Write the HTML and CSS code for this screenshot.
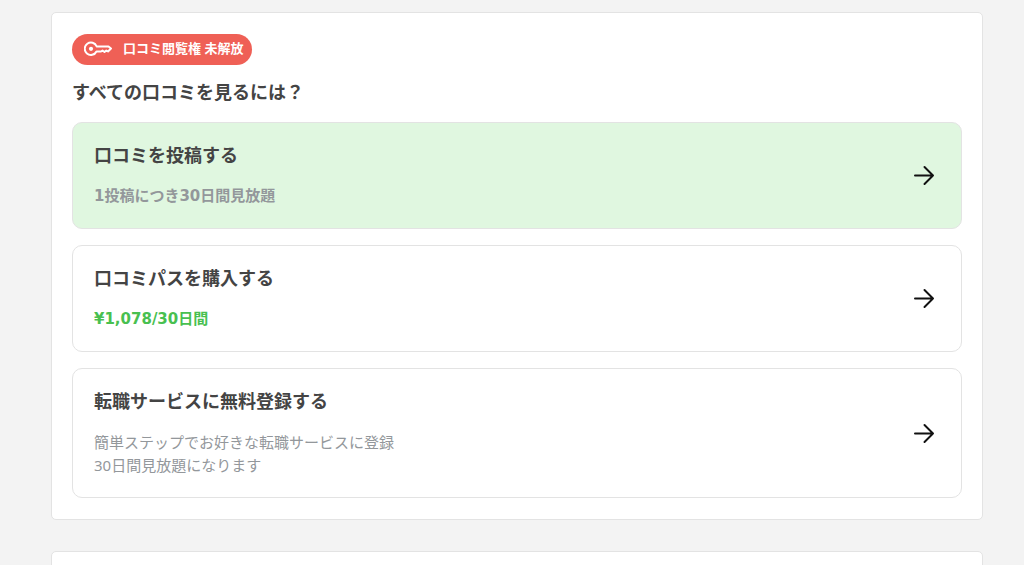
FILE: index.html
```html
<!DOCTYPE html>
<html lang="ja">
<head>
<meta charset="utf-8">
<meta name="viewport" content="width=device-width, initial-scale=1">
<title>口コミ閲覧権</title>
<link rel="stylesheet" href="styles.css">
</head>
<body>
<svg class="sprite" aria-hidden="true">
  <symbol id="arrow" viewBox="0 0 22 22">
    <path d="M2 11.500H20M11.500 3L20 11.500L11.500 20" fill="none" stroke="currentColor" stroke-width="2" stroke-linecap="round" stroke-linejoin="round"/>
  </symbol>
</svg>
<main class="page">
  <section class="panel">
    <p class="badge">
      <svg class="badge-icon" viewBox="0 0 28 16" aria-hidden="true">
        <path d="M12.700 5.500H24.500L27 7.500L24 10.500L22.300 9.500L20.500 11L18.500 9.500L17 10.500H12.500A6.200 6.200 0 1 1 12.700 5.500Z" fill="none" stroke="currentColor" stroke-width="2" stroke-linejoin="round"/>
        <circle cx="7" cy="7.800" r="2.100" fill="currentColor"/>
      </svg>
      <span>口コミ閲覧権 未解放</span>
    </p>
    <h2 class="heading">すべての口コミを見るには？</h2>
    <div class="options">
      <a class="option option-featured" href="#post">
        <span class="option-body">
          <span class="option-title">口コミを投稿する</span>
          <span class="option-note note-strong">1投稿につき30日間見放題</span>
        </span>
        <svg class="arrow" aria-hidden="true"><use href="#arrow"/></svg>
      </a>
      <a class="option" href="#pass">
        <span class="option-body">
          <span class="option-title">口コミパスを購入する</span>
          <span class="option-note note-strong note-price">¥1,078/30日間</span>
        </span>
        <svg class="arrow" aria-hidden="true"><use href="#arrow"/></svg>
      </a>
      <a class="option" href="#register">
        <span class="option-body">
          <span class="option-title">転職サービスに無料登録する</span>
          <span class="option-note">簡単ステップでお好きな転職サービスに登録<br>30日間見放題になります</span>
        </span>
        <svg class="arrow" aria-hidden="true"><use href="#arrow"/></svg>
      </a>
    </div>
  </section>
  <section class="panel panel-next"></section>
</main>
</body>
</html>
```

FILE: styles.css
```css
* {
  box-sizing: border-box;
}

body {
  margin: 0;
  background: #f3f3f3;
  color: #444;
  font-family: "Noto Sans", "Noto Sans CJK JP", sans-serif;
}

.sprite {
  display: none;
}

.page {
  display: flex;
  flex-direction: column;
  gap: 31px;
  height: 100vh;
  padding: 12px 41px 0 51px;
  overflow: hidden;
}

.panel {
  flex: none;
  padding: 21px 20px;
  background: #fff;
  border: 1px solid #e3e3e3;
  border-radius: 5px;
}

.panel-next {
  min-height: 120px;
}

.badge {
  display: flex;
  align-items: center;
  gap: 11px;
  width: fit-content;
  margin: 0;
  padding: 4px 9px 6px 12px;
  border-radius: 16px;
  background: #ef6056;
  color: #fff;
  font-size: 13px;
  font-weight: 700;
  line-height: 21px;
}

.badge-icon {
  width: 28px;
  height: 16px;
}

.heading {
  margin: 14px 0 16px;
  font-size: 18px;
  font-weight: 700;
  line-height: 27px;
}

.options {
  display: grid;
  gap: 16px;
}

.option {
  display: flex;
  align-items: center;
  justify-content: space-between;
  padding: 19px 26px 20px 21px;
  border: 1px solid #e3e3e3;
  border-radius: 10px;
  color: #444;
  text-decoration: none;
}

.option-featured {
  background: #e0f7e0;
}

.option-body {
  display: grid;
  gap: 16px;
}

.option-title {
  font-size: 18px;
  font-weight: 700;
  line-height: 27px;
}

.option-note {
  color: #93979b;
  font-size: 15px;
  line-height: 23px;
}

.note-strong {
  font-family: "DejaVu Sans", "Noto Sans CJK JP", sans-serif;
  font-weight: 700;
}

.note-price {
  color: #48c050;
}

.arrow {
  flex: none;
  width: 22px;
  height: 22px;
  color: #111;
}
```
